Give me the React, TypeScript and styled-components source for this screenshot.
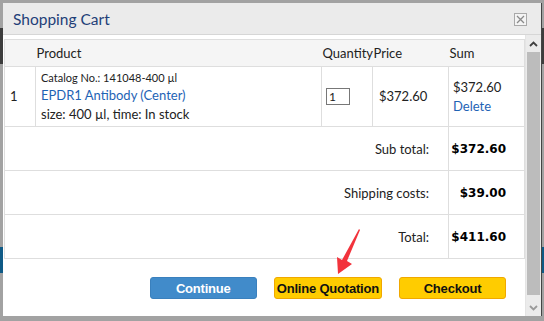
import React from "react";
import styled, { createGlobalStyle } from "styled-components";

const GlobalStyle = createGlobalStyle`
  html, body {
    margin: 0;
    padding: 0;
    overflow: hidden;
  }
  body {
    font-family: Lato, "Open Sans", sans-serif;
    color: #222;
  }
`;

const items = [
  {
    no: 1,
    catalog: "Catalog No.: 141048-400 µl",
    name: "EPDR1 Antibody (Center)",
    info: "size: 400 µl, time: In stock",
    qty: 1,
    price: "$372.60",
    sum: "$372.60",
  },
];

const totals = [
  { label: "Sub total:", value: "$372.60" },
  { label: "Shipping costs:", value: "$39.00" },
  { label: "Total:", value: "$411.60" },
];

const App = () => {
  return (
    <SPage>
      <GlobalStyle />
      <SBackdrop>
        <SBand $height={28} $color="#a2a2a2" />
        <SBand $height={36} $color="#3d3d3d" />
        <SBand $height={183} $color="#a2a2a2" />
        <SBand $height={26} $color="#0f5a86" />
        <SBand $height={48} $color="#a2a2a2" />
      </SBackdrop>

      <SModal>
        <SHeader>
          <STitle>Shopping Cart</STitle>
          <SClose aria-label="close">
            <svg width="9" height="9" viewBox="0 0 9 9">
              <path d="M1 1L8 8M8 1L1 8" stroke="#8a8a8a" strokeWidth="1.3" />
            </svg>
          </SClose>
        </SHeader>

        <SBodyWrap>
          <SBody>
            <STable>
              <colgroup>
                <col style={{ width: 31 }} />
                <col style={{ width: 286 }} />
                <col style={{ width: 51 }} />
                <col style={{ width: 76 }} />
                <col style={{ width: 76 }} />
              </colgroup>
              <thead>
                <tr>
                  <SHeadCell />
                  <SHeadCell>Product</SHeadCell>
                  <SHeadCell>Quantity</SHeadCell>
                  <SHeadCell>Price</SHeadCell>
                  <SHeadCell>Sum</SHeadCell>
                </tr>
              </thead>
              <tbody>
                {items.map(item => (
                  <SItemRow key={item.no}>
                    <SCell $pad="0 0 0 5px">{item.no}</SCell>
                    <SCell>
                      <SCatalog>{item.catalog}</SCatalog>
                      <SLink>{item.name}</SLink>
                      <SInfo>{item.info}</SInfo>
                    </SCell>
                    <SCell $pad="0 0 0 4px">
                      <SQty>{item.qty}</SQty>
                    </SCell>
                    <SCell $pad="0 0 0 6px">{item.price}</SCell>
                    <SCell $pad="0 0 0 4px">
                      <div>{item.sum}</div>
                      <SLink>Delete</SLink>
                    </SCell>
                  </SItemRow>
                ))}
                {totals.map(t => (
                  <STotalRow key={t.label}>
                    <SLabelCell colSpan={4}>{t.label}</SLabelCell>
                    <SValueCell>{t.value}</SValueCell>
                  </STotalRow>
                ))}
              </tbody>
            </STable>

            <SActions>
              <SButton $variant="blue">Continue</SButton>
              <SButton $variant="yellow">Online Quotation</SButton>
              <SButton $variant="yellow">Checkout</SButton>
            </SActions>
          </SBody>

          <SScrollbar>
            <SScrollArrow>
              <svg width="9" height="6" viewBox="0 0 9 6">
                <path d="M1 5L4.5 1.5L8 5" stroke="#404040" strokeWidth="1.8" fill="none" />
              </svg>
            </SScrollArrow>
            <SThumb />
            <SScrollArrow>
              <svg width="9" height="6" viewBox="0 0 9 6">
                <path d="M1 1L4.5 4.5L8 1" stroke="#9a9a9a" strokeWidth="1.8" fill="none" />
              </svg>
            </SScrollArrow>
          </SScrollbar>
        </SBodyWrap>
      </SModal>

      <SArrow width="30" height="50" viewBox="0 0 30 50">
        <polygon
          points="28,1 15,32 20,35 6,45 5,28 10,31 27,0"
          fill="#f2333c"
        />
      </SArrow>
    </SPage>
  );
};

export default App;

const SPage = styled.div`
  position: relative;
  width: 544px;
  height: 321px;
  background: #a2a2a2;
  overflow: hidden;
`;

const SBackdrop = styled.div`
  display: flex;
  flex-direction: column;
  width: 100%;
`;

const SBand = styled.div<{ $height: number; $color: string }>`
  height: ${p => p.$height}px;
  background: ${p => p.$color};
`;

const SModal = styled.div`
  position: absolute;
  left: 3px;
  top: 3px;
  width: 538px;
  height: 313px;
  background: #fff;
  display: flex;
  flex-direction: column;
  box-shadow: 1px 0 0 #444;
`;

const SHeader = styled.div`
  height: 31px;
  flex: none;
  background: #ebebeb;
  border-bottom: 1px solid #d6d6d6;
  display: flex;
  align-items: center;
  justify-content: space-between;
  padding: 0 14px 0 10px;
`;

const STitle = styled.div`
  font-size: 15.5px;
  color: #1f3f78;
  padding-top: 1px;
`;

const SClose = styled.button`
  width: 13px;
  height: 13px;
  padding: 0;
  border: 1px solid #a9a9a9;
  background: #f4f4f4;
  display: flex;
  align-items: center;
  justify-content: center;
  margin-top: 2px;
`;

const SBodyWrap = styled.div`
  flex: 1;
  display: grid;
  grid-template-columns: 522px 16px;
  min-height: 0;
`;

const SBody = styled.div`
  overflow: hidden;
  padding: 4px 0 0 1px;
`;

const SScrollbar = styled.div`
  background: #ebebeb;
  display: flex;
  flex-direction: column;
  border-left: 1px solid #e4e4e4;
`;

const SScrollArrow = styled.div`
  height: 17px;
  flex: none;
  display: flex;
  align-items: center;
  justify-content: center;
`;

const SThumb = styled.div`
  flex: 1;
  margin: 0 1px 4px 1px;
  background: #bcbcbc;
`;

const STable = styled.table`
  width: 521px;
  border-collapse: collapse;
  table-layout: fixed;
  font-size: 13px;
  border-left: 1px solid #dedede;
  border-right: 1px solid #dedede;
`;

const SHeadCell = styled.th`
  height: 26px;
  background: #f5f5f5;
  border-top: 1px solid #dedede;
  text-align: left;
  font-weight: normal;
  padding: 0 0 0 1px;
  font-size: 13px;
`;

const SItemRow = styled.tr`
  height: 60px;
  border-top: 1px solid #dedede;
`;

const SCell = styled.td<{ $pad?: string }>`
  border-left: 1px solid #dedede;
  padding: ${p => p.$pad || "0 0 0 5px"};
  vertical-align: middle;
  line-height: 19px;

  &:first-child {
    border-left: none;
  }
`;

const SCatalog = styled.div`
  font-size: 11px;
  line-height: 17px;
`;

const SLink = styled.div`
  color: #1e63b5;
  font-size: 13px;
  line-height: 19px;
`;

const SInfo = styled.div`
  font-size: 13px;
  line-height: 19px;
`;

const SQty = styled.div`
  width: 20px;
  height: 15px;
  border: 1px solid #777;
  font-size: 12px;
  line-height: 15px;
  padding-left: 2px;
  box-sizing: content-box;
`;

const STotalRow = styled.tr`
  height: 44px;
  border-top: 1px solid #dedede;

  &:last-child {
    border-bottom: 1px solid #dedede;
  }
`;

const SLabelCell = styled.td`
  text-align: right;
  padding-right: 19px;
`;

const SValueCell = styled.td`
  border-left: 1px solid #dedede;
  text-align: right;
  padding-right: 18px;
  font-family: "DejaVu Sans", Verdana, sans-serif;
  font-weight: bold;
  font-size: 12px;
  color: #000;
`;

const SActions = styled.div`
  display: flex;
  justify-content: flex-end;
  gap: 17px;
  padding: 18px 19px 0 0;
`;

const SButton = styled.button<{ $variant: "blue" | "yellow" }>`
  min-width: 107px;
  height: 22px;
  padding: 0 2px;
  border-radius: 3px;
  font-family: "Liberation Sans", Arial, sans-serif;
  font-weight: bold;
  font-size: 13px;
  letter-spacing: -0.2px;
  background: ${p => (p.$variant === "blue" ? "#418bca" : "#ffcc00")};
  border: 1px solid ${p => (p.$variant === "blue" ? "#3a80bd" : "#f0a800")};
  color: ${p => (p.$variant === "blue" ? "#fff" : "#111")};
`;

const SArrow = styled.svg`
  position: absolute;
  left: 332px;
  top: 229px;
`;
